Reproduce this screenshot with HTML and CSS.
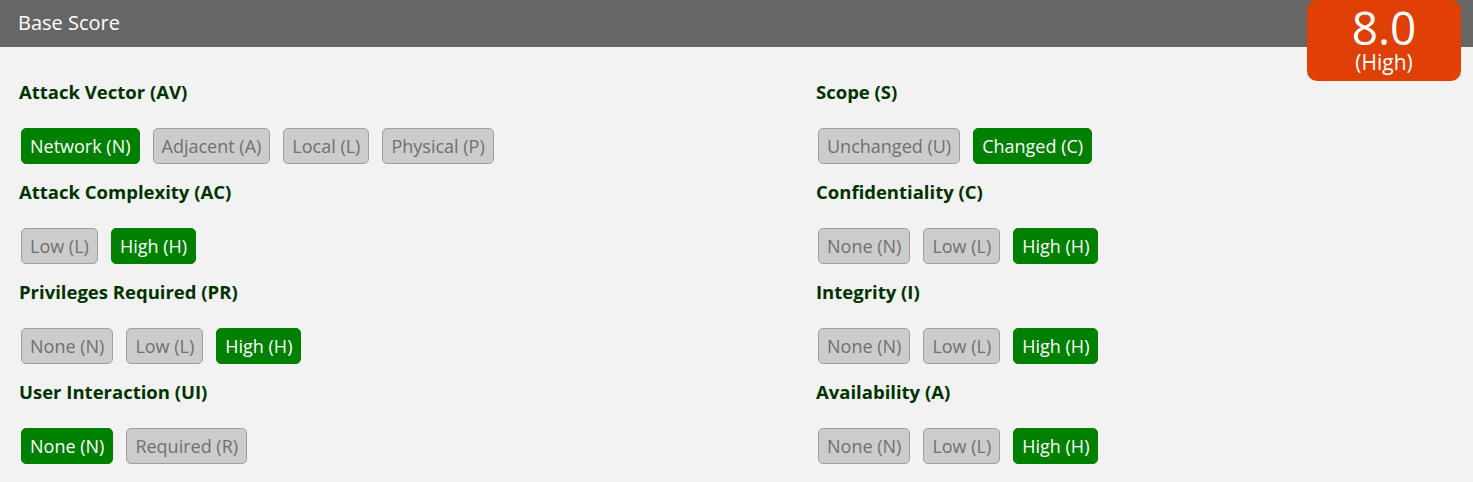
FILE: index.html
```html
<!DOCTYPE html>
<html>
<head>
<meta charset="utf-8">
<link rel="stylesheet" href="styles.css">
</head>
<body>
<div class="page">
  <div class="topbar">Base Score</div>
  <div class="score">
    <div class="score-num">8.0</div>
    <div class="score-sev">(High)</div>
  </div>
  <div class="metrics">
    <div class="col">
      <div class="group">
        <h3>Attack Vector (AV)</h3>
        <div class="opts"><span class="btn on">Network (N)</span><span class="btn">Adjacent (A)</span><span class="btn">Local (L)</span><span class="btn">Physical (P)</span></div>
      </div>
      <div class="group">
        <h3>Attack Complexity (AC)</h3>
        <div class="opts"><span class="btn">Low (L)</span><span class="btn on">High (H)</span></div>
      </div>
      <div class="group">
        <h3>Privileges Required (PR)</h3>
        <div class="opts"><span class="btn">None (N)</span><span class="btn">Low (L)</span><span class="btn on">High (H)</span></div>
      </div>
      <div class="group">
        <h3>User Interaction (UI)</h3>
        <div class="opts"><span class="btn on">None (N)</span><span class="btn">Required (R)</span></div>
      </div>
    </div>
    <div class="col">
      <div class="group">
        <h3>Scope (S)</h3>
        <div class="opts"><span class="btn">Unchanged (U)</span><span class="btn on">Changed (C)</span></div>
      </div>
      <div class="group">
        <h3>Confidentiality (C)</h3>
        <div class="opts"><span class="btn">None (N)</span><span class="btn">Low (L)</span><span class="btn on">High (H)</span></div>
      </div>
      <div class="group">
        <h3>Integrity (I)</h3>
        <div class="opts"><span class="btn">None (N)</span><span class="btn">Low (L)</span><span class="btn on">High (H)</span></div>
      </div>
      <div class="group">
        <h3>Availability (A)</h3>
        <div class="opts"><span class="btn">None (N)</span><span class="btn">Low (L)</span><span class="btn on">High (H)</span></div>
      </div>
    </div>
  </div>
</div>
</body>
</html>
```

FILE: styles.css
```css
html, body {
  margin: 0;
  padding: 0;
  background: #f2f2f2;
  font-family: "Open Sans", "Noto Sans", sans-serif;
}
.page {
  position: relative;
  width: 1473px;
  height: 482px;
  overflow: hidden;
}
.topbar {
  height: 47px;
  background: #666666;
  color: #ffffff;
  font-size: 20px;
  line-height: 45px;
  padding-left: 18px;
  box-sizing: border-box;
}
.score {
  position: absolute;
  top: 0;
  right: 12px;
  width: 154px;
  height: 81px;
  border-radius: 10px;
  background: #e04006;
  color: #ffffff;
  text-align: center;
}
.score-num {
  font-size: 46px;
  line-height: 46px;
  padding-top: 4px;
}
.score-sev {
  font-size: 21px;
  line-height: 24px;
}
.metrics {
  display: grid;
  grid-template-columns: 797px 1fr;
  padding: 33px 0 0 19px;
}
.group {
  margin-bottom: 16px;
}
h3 {
  margin: 0 0 24px 0;
  font-size: 18.5px;
  line-height: 24px;
  font-weight: 700;
  color: #003300;
}
.opts {
  display: flex;
  gap: 13px;
  padding-left: 2px;
}
.btn {
  display: inline-block;
  box-sizing: border-box;
  height: 36px;
  line-height: 34px;
  padding: 0 8px;
  border: 1px solid #a0a0a0;
  border-radius: 5px;
  background: #cccccc;
  color: #707070;
  font-size: 18px;
}
.btn.on {
  background: #008000;
  border-color: #008000;
  color: #ffffff;
}
```
